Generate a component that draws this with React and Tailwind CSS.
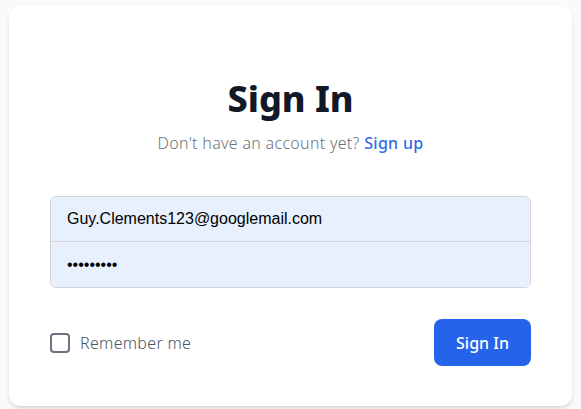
import { useState } from 'react';

function App() {
  const [remember, setRemember] = useState(false);

  return (
    <div className="min-h-[409px] bg-[#f9fafb] px-[9px] pt-[6px] font-['Noto_Sans',sans-serif]">
      <div className="bg-white rounded-xl shadow-md px-[41px] pt-[73px] pb-[40px]">
        {/* Header */}
        <h1 className="text-center text-4xl leading-10 font-extrabold text-[#111827]">Sign In</h1>
        <p className="mt-3 text-center text-base leading-6 font-light tracking-[0.3px] text-[#6b7280]">
          Don't have an account yet?{' '}
          <a href="#" className="font-medium text-[#2f6be6]">Sign up</a>
        </p>

        {/* Inputs */}
        <div className="mt-[41px] rounded-md border border-[#d1d5db] overflow-hidden">
          <input
            type="email"
            defaultValue="Guy.Clements123@googlemail.com"
            className="block w-full h-[45px] px-4 bg-[#e8f0fe] text-base text-black font-['Liberation_Sans',Arial,sans-serif] outline-none border-b border-[#d1d5db]"
          />
          <input
            type="password"
            defaultValue="password1"
            className="block w-full h-[45px] px-4 bg-[#e8f0fe] text-base text-black font-['Liberation_Sans',Arial,sans-serif] outline-none"
          />
        </div>

        {/* Actions */}
        <div className="mt-[31px] flex items-center justify-between">
          <label className="flex items-center gap-[10px] cursor-pointer">
            <input
              type="checkbox"
              checked={remember}
              onChange={(e) => setRemember(e.target.checked)}
              className="appearance-none w-5 h-5 rounded border-2 border-[#6b7280] bg-white"
            />
            <span className="text-base font-light tracking-[0.3px] text-[#4b5563]">Remember me</span>
          </label>
          <button className="w-[97px] h-[47px] rounded-lg bg-[#2563eb] text-white text-base font-medium">
            Sign In
          </button>
        </div>
      </div>
    </div>
  );
}

export default App;
